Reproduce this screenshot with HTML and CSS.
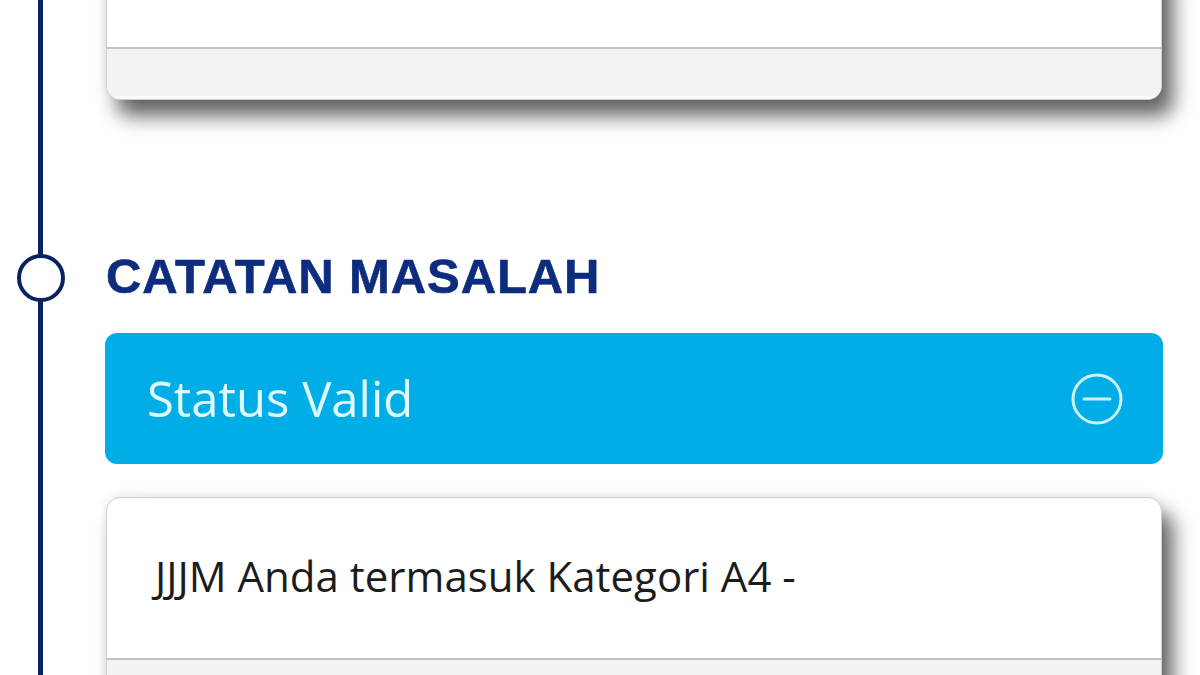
FILE: index.html
```html
<!DOCTYPE html>
<html lang="id">
<head>
<meta charset="utf-8">
<title>Catatan Masalah</title>
<link rel="stylesheet" href="styles.css">
</head>
<body>
<div class="page">
  <div class="card card-top">
    <div class="card-body card-body-top"></div>
    <div class="card-footer"></div>
  </div>

  <h2 class="section-title">CATATAN MASALAH</h2>

  <div class="status-bar">
    <span class="status-text">Status Valid</span>
    <svg class="status-icon" width="54" height="54" viewBox="0 0 54 54" aria-hidden="true">
      <circle cx="27" cy="27" r="24" fill="none" stroke="#c9f3ff" stroke-width="3"/>
      <line x1="14" y1="27" x2="40" y2="27" stroke="#c9f3ff" stroke-width="3" stroke-linecap="round"/>
    </svg>
  </div>

  <div class="card card-bottom">
    <div class="card-body">
      <p class="card-text">JJJM Anda termasuk Kategori A4 -</p>
    </div>
    <div class="card-footer"></div>
  </div>
</div>
</body>
</html>
```

FILE: styles.css
```css
html, body {
  margin: 0;
  padding: 0;
  background: #ffffff;
}

body {
  width: 1200px;
  height: 675px;
  overflow: hidden;
}

.page {
  height: 675px;
  overflow: hidden;
  padding: 0 38px 0 106px;
  box-sizing: border-box;
  background: linear-gradient(#0b2262, #0b2262) no-repeat 38px 0 / 5px 100%;
  display: flex;
  flex-direction: column;
}

.page > * {
  flex: none;
}

.card {
  background: #ffffff;
  border: 1px solid #cfcfcf;
  border-radius: 14px;
  overflow: hidden;
  box-shadow: 11px 16px 20px rgba(0, 0, 0, 0.62), 0 -4px 10px rgba(0, 0, 0, 0.06);
}

.card-top {
  margin-top: -40px;
}

.card-body-top {
  height: 86px;
}

.card-footer {
  height: 50px;
  background: #f3f3f3;
  border-top: 2px solid #c2c2c2;
  box-shadow: inset 0 -3px 0 #fafafa;
}

.section-title {
  position: relative;
  margin: 152px 0 0 0;
  font-family: "Liberation Sans", Arial, sans-serif;
  font-weight: 700;
  font-size: 49px;
  line-height: 48px;
  letter-spacing: 0.9px;
  color: #0d2c7e;
  -webkit-text-stroke: 0.6px #0d2c7e;
}

.section-title::before {
  content: "";
  position: absolute;
  left: -89px;
  top: 2px;
  width: 40px;
  height: 40px;
  border: 4px solid #0b2262;
  border-radius: 50%;
  background: #ffffff;
}

.status-bar {
  margin-top: 33px;
  margin-left: -1px;
  margin-right: -1px;
  height: 131px;
  background: #00ade6;
  border-radius: 12px;
  display: flex;
  align-items: center;
  justify-content: space-between;
  padding: 0 39px 0 42px;
  box-sizing: border-box;
}

.status-text {
  font-family: "Open Sans", sans-serif;
  font-size: 49px;
  color: #dffaff;
  margin-top: -2px;
}

.status-icon {
  display: block;
}

.card-bottom {
  margin-top: 33px;
}

.card-bottom .card-body {
  padding: 50px 48px 54px;
}

.card-text {
  margin: 0;
  font-family: "Open Sans", sans-serif;
  font-size: 42px;
  line-height: 56px;
  color: #1c1c1c;
}
```
